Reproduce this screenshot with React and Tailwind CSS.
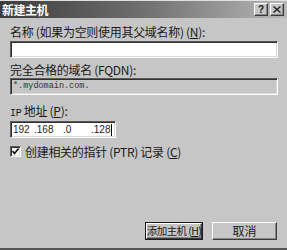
import React from 'react'

const cjk = { fontFamily: '"Noto Sans CJK SC", "Liberation Sans", sans-serif' }
const mono = { fontFamily: '"Liberation Mono", monospace' }

const sunken = 'border border-t-[#5a5a5a] border-l-[#5a5a5a] border-b-white border-r-white shadow-[inset_1px_1px_0_#303030,inset_-1px_-1px_0_#d8d8d8]'
const raised = 'border border-t-white border-l-white border-b-[#3a3a3a] border-r-[#3a3a3a] shadow-[inset_-1px_-1px_0_#888888]'

export default function App() {
  return (
    <div className="w-[287px] h-[250px] bg-[#c6c6c6] flex flex-col overflow-hidden text-[#1a1a1a]" style={cjk}>
      {/* Title bar */}
      <div className="h-[18px] border-t border-[#e0e0e0] bg-gradient-to-r from-[#3c3c3c] via-[#707070] to-[#b8b8b8] flex items-center justify-between pl-[2px] pr-[3px]">
        <span className="text-white font-bold text-[12px] leading-none tracking-[-0.5px]">新建主机</span>
        <div className="flex gap-[2px]">
          <div className={`w-[14px] h-[13px] bg-[#c6c6c6] ${raised} flex items-center justify-center text-[10px] font-bold leading-none`} style={{ fontFamily: '"Liberation Sans", sans-serif' }}>?</div>
          <div className={`w-[14px] h-[13px] bg-[#c6c6c6] ${raised} flex items-center justify-center`}>
            <svg width="8" height="7" viewBox="0 0 8 7"><path d="M0.5 0.5L7.5 6.5M7.5 0.5L0.5 6.5" stroke="#222" strokeWidth="1.4" /></svg>
          </div>
        </div>
      </div>

      {/* Body */}
      <div className="flex-1 flex flex-col px-[10px] pt-[7px]">
        <div className="text-[12px] leading-[13px] tracking-[-0.3px] whitespace-nowrap">名称 (如果为空则使用其父域名称) (<u>N</u>):</div>
        <div className={`mt-[3px] h-[17px] w-[268px] bg-white ${sunken}`} />

        <div className="mt-[5px] text-[12px] leading-[13px] tracking-[-0.3px] whitespace-nowrap">完全合格的域名 (FQDN):</div>
        <div className={`mt-[2px] h-[17px] w-[268px] bg-[#c6c6c6] ${sunken} flex items-center pl-[2px] text-[8.5px] text-[#333]`} style={mono}>*.mydomain.com.</div>

        <div className="mt-[9px] text-[12px] leading-[13px] tracking-[-0.3px] whitespace-nowrap"><span style={mono} className="text-[10px]">IP</span> 地址 (<u>P</u>):</div>
        <div className={`mt-[1px] h-[17px] w-[106px] bg-white ${sunken} flex items-center pl-[2px] text-[10px] leading-none text-[#222]`} style={{ fontFamily: '"Liberation Sans", sans-serif' }}>
          <span className="w-[21px]">192</span>
          <span className="w-[29px]">.168</span>
          <span className="w-[28px]">.0</span>
          <span>.128</span>
          <span className="ml-[1px] w-px h-[12px] bg-black" />
        </div>

        <div className="mt-[7px] flex items-center gap-[4px]">
          <div className={`w-[11px] h-[11px] bg-white ${sunken} flex items-center justify-center`}>
            <svg width="7" height="7" viewBox="0 0 7 7"><path d="M0.5 3L2.5 5.5L6.5 0.5" fill="none" stroke="#111" strokeWidth="1.6" /></svg>
          </div>
          <span className="text-[12px] leading-[13px] tracking-[-0.3px] whitespace-nowrap">创建相关的指针 (PTR) 记录 (<u>C</u>)</span>
        </div>

        <div className="flex-1" />

        <div className="flex justify-end gap-[9px] mb-[8px]">
          <div className="border border-[#1a1a1a]">
            <div className={`w-[56px] h-[16px] bg-[#c6c6c6] ${raised} flex items-center justify-center text-[10.5px] leading-none tracking-[-0.6px] whitespace-nowrap`}>添加主机 (<u>H</u>)</div>
          </div>
          <div className={`w-[65px] h-[18px] bg-[#c6c6c6] ${raised} flex items-center justify-center text-[12px] leading-none`}>取消</div>
        </div>
      </div>
      <div className="h-[2px] bg-[#555555]" />
    </div>
  )
}
